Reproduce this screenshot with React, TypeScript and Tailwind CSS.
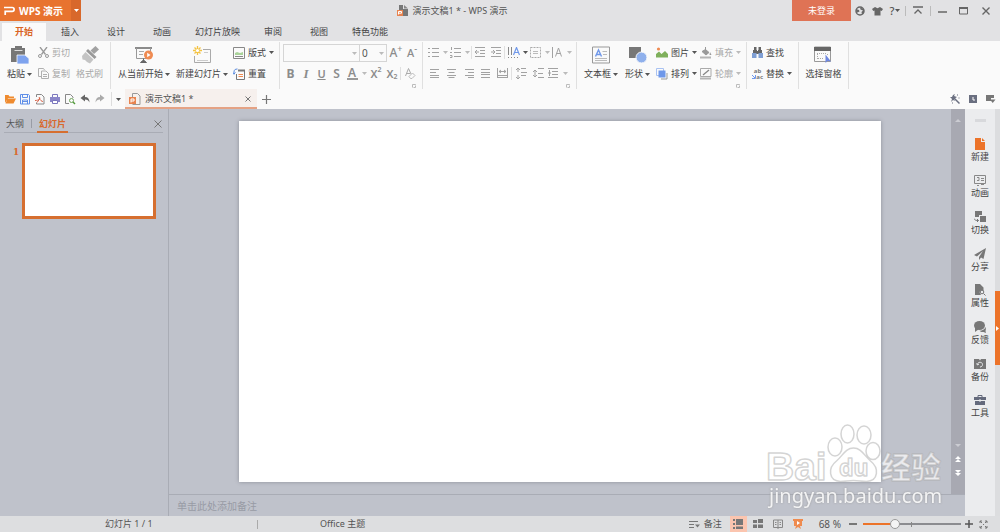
import type { ReactNode } from "react"

interface IconProps {
  w?: number
  h?: number
  className?: string
  children: ReactNode
}

function Icon({ w = 12, h = 12, className = "", children }: IconProps) {
  return (
    <svg
      width={w}
      height={h}
      viewBox={`0 0 ${w} ${h}`}
      fill="none"
      aria-hidden="true"
      className={`shrink-0 ${className}`}
    >
      {children}
    </svg>
  )
}

function Caret({ className = "text-[#555]" }: { className?: string }) {
  return (
    <Icon w={5} h={3} className={className}>
      <path d="M0 0h5L2.5 3z" fill="currentColor" />
    </Icon>
  )
}

function Launcher() {
  return (
    <button type="button" aria-label="更多设置" className="mr-[6px] flex h-[5px] w-1 self-end">
      <Icon w={4} h={4}>
        <path d="M.5 3.500V.5h3v1M1.500 3.500h2V2" stroke="#bbb" />
      </Icon>
    </button>
  )
}

/* ---------- title bar ---------- */

function TitleBar() {
  return (
    <header className="flex h-[21px] text-[#555]">
      <button type="button" className="flex w-[81px] items-stretch bg-[#e8732f] text-[10px] font-bold text-white">
        <span className="flex flex-1 items-center gap-1 pl-1">
          <Icon w={11} h={9}>
            <path d="M0 1.500h8.200a1.900 1.900 0 0 1 0 3.800H1.200V9" stroke="#fff" strokeWidth="1.700" />
          </Icon>
          <span className="whitespace-nowrap">WPS 演示</span>
        </span>
        <span className="flex w-[10px] items-center justify-center bg-[#d8682b]">
          <Caret className="text-white" />
        </span>
      </button>

      <h1 className="flex flex-1 items-center justify-center gap-1 pl-8 text-[9px] whitespace-nowrap">
        <Icon w={11} h={11}>
          <path d="M2 0h4v4h5v7H2z" fill="#777" />
          <path d="M7 0l4 3.500H7z" fill="#888" />
          <path d="M0 5h6v6H0z" fill="#e8834f" />
          <path d="M1.500 9.500V6.500h3v1.700h-3" stroke="#fff" />
        </Icon>
        <span>演示文稿1 * - WPS 演示</span>
      </h1>

      <div className="flex w-[208px] items-center">
        <button type="button" className="h-[21px] w-[59px] bg-[#df7355] text-[9px] text-white">
          未登录
        </button>
        <button type="button" aria-label="网络" className="flex w-[17px] justify-center">
          <Icon w={10} h={10}>
            <circle cx="5" cy="5" r="4" stroke="#666" strokeWidth="1.500" />
            <path d="M1 3l3 1 .5 1.500L1.500 7zM5 1.500L9 3v4L7 8.500 6.500 6 8 4.500 5.500 3.500z" fill="#666" />
          </Icon>
        </button>
        <button type="button" aria-label="皮肤" className="flex w-[18px] justify-center">
          <Icon w={11} h={10}>
            <path d="M3 1l2.500 1.300L8 1l3 2-1.300 2L8.500 4.500V9.500h-6V4.500L1.300 5 0 3z" fill="#666" />
          </Icon>
        </button>
        <button type="button" aria-label="帮助" className="flex w-[18px] items-center justify-center gap-px text-[11px] font-medium">
          ?
          <Caret />
        </button>
        <span className="ml-px h-[10px] w-px bg-[#bbb]" />
        <button type="button" aria-label="隐藏功能区" className="flex w-6 justify-center">
          <Icon w={10} h={9}>
            <path d="M0 1h10M1.500 7.500L5 4l3.500 3.500" stroke="#666" strokeWidth="1.300" />
          </Icon>
        </button>
        <span className="h-[10px] w-px bg-[#bbb]" />
        <button type="button" aria-label="最小化" className="flex w-[23px] justify-center">
          <Icon w={9} h={9}>
            <path d="M0 6h9" stroke="#666" strokeWidth="1.500" />
          </Icon>
        </button>
        <button type="button" aria-label="最大化" className="flex w-[18px] justify-center">
          <Icon w={9} h={8}>
            <path d="M.5 1h8v6h-8z" stroke="#666" />
            <path d="M0 1h9" stroke="#666" strokeWidth="2" />
          </Icon>
        </button>
        <button type="button" aria-label="关闭" className="flex flex-1 justify-center">
          <Icon w={8} h={8}>
            <path d="M.5.5l7 7M7.500.5l-7 7" stroke="#666" strokeWidth="1.400" />
          </Icon>
        </button>
      </div>
    </header>
  )
}

/* ---------- ribbon tabs ---------- */

const ribbonTabs = ["开始", "插入", "设计", "动画", "幻灯片放映", "审阅", "视图", "特色功能"]

function tabStyle(tab: string, active: boolean) {
  if (active) return "mr-px h-[18px] bg-[#fafafa] px-[13px] font-bold text-[#d96424]"
  return tab.length > 2 ? "h-[18px] px-[10px]" : "h-[18px] px-[14px]"
}

function RibbonTabs() {
  return (
    <nav className="flex h-5 items-end pl-[2px] text-[9px] text-[#444]">
      {ribbonTabs.map((tab, i) => (
        <button key={tab} type="button" className={tabStyle(tab, i === 0)}>
          {tab}
        </button>
      ))}
    </nav>
  )
}

/* ---------- ribbon ---------- */

function Group({ className = "", children }: { className?: string; children: ReactNode }) {
  return <div className={`flex h-[47px] shrink-0 border-r border-[#e0e0e0] ${className}`}>{children}</div>
}

interface BigButtonProps {
  label: string
  caret?: boolean
  disabled?: boolean
  children: ReactNode
}

function BigButton({ label, caret, disabled, children }: BigButtonProps) {
  return (
    <button
      type="button"
      disabled={disabled}
      className={`flex shrink-0 flex-col items-center ${disabled ? "text-[#a8a8a8]" : "text-[#444]"}`}
    >
      <span className="flex h-[22px] items-end">{children}</span>
      <span className="flex h-5 items-center gap-[2px] whitespace-nowrap">
        {label}
        {caret && <Caret />}
      </span>
    </button>
  )
}

function RowButton({ label, caret, disabled, children }: BigButtonProps) {
  return (
    <button
      type="button"
      disabled={disabled}
      className={`flex h-[21px] items-center gap-[3px] whitespace-nowrap ${disabled ? "text-[#a8a8a8]" : "text-[#444]"}`}
    >
      {children}
      {label}
      {caret && <Caret className={disabled ? "text-[#bbb]" : "text-[#555]"} />}
    </button>
  )
}

function Tool({ label, className = "w-[15px]", children }: { label: string; className?: string; children: ReactNode }) {
  return (
    <button
      type="button"
      aria-label={label}
      className={`flex h-[21px] shrink-0 items-center justify-center text-[#8c8c8c] ${className}`}
    >
      {children}
    </button>
  )
}

function Lines({ d }: { d: string }) {
  return (
    <Icon w={11} h={11}>
      <path d={d} stroke="#a2a2a2" />
    </Icon>
  )
}

const paleCaret = <Caret className="text-[#bbb]" />
const toolDivider = <span className="h-[13px] w-px shrink-0 self-center bg-[#e0e0e0]" />

function ClipboardGroup() {
  return (
    <Group className="w-[111px] gap-[6px] pl-[7px]">
      <BigButton label="粘贴" caret>
        <Icon w={18} h={18}>
          <path d="M0 2h4V0h7v2h3v14H0z" fill="#777" />
          <path d="M3.500 4.500h8" stroke="#ddd" />
          <path d="M6 9h8l4 3.500V18H6z" fill="#7ea3ee" stroke="#fafafa" strokeWidth=".8" />
        </Icon>
      </BigButton>
      <div className="flex flex-col">
        <RowButton label="剪切" disabled>
          <Icon w={11} h={11}>
            <path d="M2 0l5.500 7.500M9 0L3.500 7.500" stroke="#999" strokeWidth="1.300" />
            <circle cx="2" cy="9" r="1.500" stroke="#999" />
            <circle cx="9" cy="9" r="1.500" stroke="#999" />
          </Icon>
        </RowButton>
        <RowButton label="复制" disabled>
          <Icon w={11} h={11}>
            <path d="M3 8.500H.5v-8h5l1 1.500" stroke="#b0b0b0" />
            <path d="M3.500 3h4.500l2.500 2.500V10.500h-7zM5 6.500h4M5 8.500h4" stroke="#b0b0b0" />
          </Icon>
        </RowButton>
      </div>
      <BigButton label="格式刷" disabled>
        <Icon w={18} h={18}>
          <path d="M14.500 0L18 3.500 13 8 9.500 4.500z" fill="#a2a2a2" />
          <path d="M7 3l8.500 8-2 2L5 5z" fill="#999" />
          <path d="M4.500 6l8 7.500-3.500 4-3-1.500-2-2-2.500-.5L1 10z" fill="#c4c4c4" />
        </Icon>
      </BigButton>
    </Group>
  )
}

function SlidesGroup() {
  return (
    <Group className="w-[169px] gap-[6px] pl-[7px]">
      <BigButton label="从当前开始" caret>
        <Icon w={18} h={18}>
          <path d="M0 2h17" stroke="#666" strokeWidth="1.500" />
          <path d="M1.500 2v10.500h14V2" stroke="#999" />
          <path d="M4 5.500h5M4 8.500h4" stroke="#aaa" />
          <path d="M8.500 12.500V15M5.500 16.500l3-2.500 3 2.500z" stroke="#666" fill="#666" />
          <circle cx="13.500" cy="9" r="4.500" fill="#ef8b52" />
          <path d="M12.200 6.700v4.600l3.300-2.300z" fill="#fff" />
        </Icon>
      </BigButton>
      <BigButton label="新建幻灯片" caret>
        <Icon w={18} h={18}>
          <path d="M10 3.500h7.500v13h-16V10" stroke="#aaa" />
          <path d="M4 14.500h11M11 6.500h4" stroke="#ccc" />
          <path d="M4.500 0v9M0 4.500h9M1.500 1.500l6 6M7.500 1.500l-6 6" stroke="#f4c343" strokeWidth="1.300" />
          <circle cx="4.500" cy="4.500" r="1.600" fill="#fff" />
        </Icon>
      </BigButton>
      <div className="-ml-px flex flex-col items-start">
        <RowButton label="版式" caret>
          <Icon w={12} h={12}>
            <path d="M.5.5h11v11H.5z" stroke="#888" />
            <path d="M2 8V6l2-1 3 1 3-1v3z" fill="#a9d39a" />
            <path d="M2 9.500h8" stroke="#888" />
          </Icon>
        </RowButton>
        <RowButton label="重置">
          <Icon w={12} h={12}>
            <path d="M3.500 6v5.500h8V2" stroke="#777" />
            <path d="M5 2.500h7" stroke="#777" strokeWidth="2" />
            <path d="M5.500 6.500h4.500M5.500 8.500h4.500" stroke="#ef8b52" />
            <path d="M1 6.500V4C1 2 2 1 4.500 1M0 4.500l1 1.500 1.500-1.500" stroke="#5a8be0" />
          </Icon>
        </RowButton>
      </div>
    </Group>
  )
}

function FontGroup() {
  return (
    <Group className="w-[143px] flex-col pl-[3px]">
      <div className="flex h-[21px] items-center">
        <label className="relative block">
          <span className="sr-only">字体</span>
          <select className="block h-[18px] w-[77px] appearance-none border border-[#d5d5d5] bg-[#fafafa]"></select>
          <span className="pointer-events-none absolute top-[8px] right-[3px]">{paleCaret}</span>
        </label>
        <label className="relative block">
          <span className="sr-only">字号</span>
          <select className="block h-[18px] w-[27px] appearance-none border border-l-0 border-[#d5d5d5] bg-[#fafafa] pl-[2px] text-[10px] leading-4 text-[#555]">
            <option>0</option>
          </select>
          <span className="pointer-events-none absolute top-[8px] right-[3px]">{paleCaret}</span>
        </label>
        <Tool label="增大字号" className="w-[18px] text-[12px] font-medium">
          A<sup className="-top-1 text-[9px]">+</sup>
        </Tool>
        <Tool label="减小字号" className="w-[14px] text-[11px] font-medium">
          A<sup className="-top-1 text-[9px]">-</sup>
        </Tool>
      </div>
      <div className="flex h-[21px] items-center text-[11px]">
        <Tool label="加粗" className="w-[15px] text-[12px]">
          <b>B</b>
        </Tool>
        <Tool label="倾斜" className="w-4">
          <i className="font-['Liberation_Serif',serif] text-[13px] font-bold">I</i>
        </Tool>
        <Tool label="下划线">
          <u className="font-semibold">U</u>
        </Tool>
        <Tool label="阴影" className="w-[15px] text-[12px]">
          <span className="font-semibold">S</span>
        </Tool>
        <Tool label="字体颜色" className="w-4">
          <span className="h-3 w-[11px] border-b-2 border-[#999] text-[12px] leading-[10px] font-semibold">A</span>
        </Tool>
        <Tool label="选择字体颜色" className="w-2">
          {paleCaret}
        </Tool>
        <Tool label="上标" className="w-4 font-semibold">
          X<sup className="-top-1 text-[7px]">2</sup>
        </Tool>
        <Tool label="下标" className="w-4 font-semibold">
          X<sub className="-bottom-[3px] text-[7px]">2</sub>
        </Tool>
        {toolDivider}
        <Tool label="清除格式" className="w-[18px]">
          <Icon w={11} h={11}>
            <path d="M.5 8L3.500.5 6 6M1.500 5.500h3.500" stroke="#aaa" />
            <path d="M4 8.500L7.500 5 10 7.500 7 10.500H5.500z" stroke="#bbb" />
          </Icon>
        </Tool>
      </div>
      <Launcher />
    </Group>
  )
}

function ParagraphGroup() {
  return (
    <Group className="w-[154px] flex-col pl-1">
      <div className="flex h-[21px] items-center">
        <Tool label="项目符号" className="w-[22px] gap-1">
          <Lines d="M0 1.500h2M4 1.500h7M0 5.500h2M4 5.500h7M0 9.500h2M4 9.500h7" />
          {paleCaret}
        </Tool>
        <Tool label="编号" className="w-[22px] gap-1">
          <Lines d="M1.500 0v3M4 1.500h7M0 5.500h2M4 5.500h7M0 8.500h2v2H0M4 9.500h7" />
          {paleCaret}
        </Tool>
        {toolDivider}
        <Tool label="减少缩进" className="w-[17px]">
          <Lines d="M0 .5h10M5 3.500h5M5 6.500h5M0 9.500h10M0 5h4M2 3L0 5l2 2" />
        </Tool>
        <Tool label="增加缩进">
          <Lines d="M0 .5h10M5 3.500h5M5 6.500h5M0 9.500h10M0 5h4M2 3l2 2-2 2" />
        </Tool>
        {toolDivider}
        <Tool label="文字方向" className="ml-[2px] w-[21px] gap-[3px]">
          <Icon w={12} h={12}>
            <path d="M.5 0v8M3.500 0v8M.5 10v1M3.500 10v1M6.500 10v1M9.500 10v1" stroke="#888" />
            <path d="M5.500 8L8.500.5l3 7.500M6.500 5.500h4" stroke="#6f98ea" strokeWidth="1.200" />
          </Icon>
          <Caret />
        </Tool>
        <Tool label="对齐文本" className="w-[23px] gap-1">
          <Icon w={11} h={11}>
            <path d="M.5.5h10v10H.5z" stroke="#aaa" strokeDasharray="2 1" />
            <path d="M3 4.500h5M3 6.500h5" stroke="#bbb" />
          </Icon>
          {paleCaret}
        </Tool>
        <Tool label="文字排列" className="w-[22px] gap-1">
          <Lines d="M.5 0v11M3.500 9.500L6.500 1l3 8.500M4.500 6.500h4" />
          {paleCaret}
        </Tool>
      </div>
      <div className="flex h-[21px] items-center">
        <Tool label="左对齐">
          <Lines d="M1 1.500h9M1 4.500h6M1 7.500h9M1 9.500h9" />
        </Tool>
        <Tool label="居中" className="w-[18px]">
          <Lines d="M1 1.500h9M2.500 4.500h6M1 7.500h9M2.500 9.500h6" />
        </Tool>
        <Tool label="右对齐" className="w-[18px]">
          <Lines d="M1 1.500h9M4 4.500h6M1 7.500h9M4 9.500h6" />
        </Tool>
        <Tool label="两端对齐">
          <Lines d="M1 1.500h9M1 4.500h9M1 6.500h9M1 9.500h9" />
        </Tool>
        <Tool label="分散对齐" className="w-[18px]">
          <Lines d="M.5 0v10M10.500 0v10M2 3.500h7M4 2L2 3.500 4 5M7 2l2 1.500L7 5M1 7.500h9M1 9.500h9" />
        </Tool>
        {toolDivider}
        <Tool label="行距" className="w-[18px]">
          <Lines d="M2 0v4M2 7v4M0 2l2-2 2 2M0 9l2 2 2-2M5 .5h5M5 4.500h6M5 7.500h5" />
        </Tool>
        <Tool label="段落间距" className="w-[17px]">
          <Lines d="M2 2v7M0 4l2-2 2 2M0 7l2 2 2-2M5 .5h6M5 5.500h5M5 9.500h6" />
        </Tool>
        <Tool label="段落" className="w-[22px] gap-1">
          <Lines d="M0 .5h10M4 3.500h6M4 6.500h6M0 9.500h10M1.500 2v6M0 5h3" />
          {paleCaret}
        </Tool>
      </div>
      <Launcher />
    </Group>
  )
}

function DrawingGroup() {
  return (
    <Group className="w-[170px] flex-col pl-[7px]">
      <div className="flex gap-[7px]">
        <BigButton label="文本框" caret>
          <Icon w={18} h={18}>
            <path d="M.5 1h17v16H.5z" stroke="#999" />
            <path d="M3.500 10.500L6.500 4l3 6.500M4.500 8.500h4" stroke="#6f98ea" strokeWidth="1.400" />
            <path d="M10.500 5.500h4.500M11 8.500h4M3 12.500h12M3 14.500h12" stroke="#bbb" />
          </Icon>
        </BigButton>
        <BigButton label="形状" caret>
          <Icon w={18} h={18}>
            <path d="M0 1h12v11H0z" fill="#777" />
            <circle cx="12.500" cy="11.500" r="5.500" fill="#8fb0ec" stroke="#fafafa" />
          </Icon>
        </BigButton>
        <div className="-ml-px flex flex-col">
          <RowButton label="图片" caret>
            <Icon w={12} h={11}>
              <path d="M0 10.500V7l3-2.500L5.500 7 9 4l3 3v3.500z" fill="#7fb05c" />
              <circle cx="2.500" cy="2" r="1.600" fill="#ef8b52" />
            </Icon>
          </RowButton>
          <RowButton label="排列" caret>
            <Icon w={12} h={12}>
              <path d="M.5.5h7v7h-7z" stroke="#a9c2f2" />
              <path d="M2.500 2.500h7v7h-7z" fill="#6f98ea" />
              <path d="M11 5v6H5" stroke="#999" />
            </Icon>
          </RowButton>
        </div>
        <div className="-ml-1 flex flex-col">
          <RowButton label="填充" caret disabled>
            <Icon w={12} h={12}>
              <path d="M5.500 0v4M2 4.500L5.500 2.500 9 5.500 6 8z" stroke="#999" fill="#999" />
              <path d="M10 5l1.500 3h-2z" fill="#999" />
              <path d="M0 10.500h11" stroke="#b5b5b5" strokeWidth="2" />
            </Icon>
          </RowButton>
          <RowButton label="轮廓" caret disabled>
            <Icon w={12} h={12}>
              <path d="M11 .5H.5v8h10.500z" stroke="#aaa" />
              <path d="M3 7l6-5" stroke="#888" strokeWidth="1.300" />
              <path d="M0 10.500h11" stroke="#b5b5b5" strokeWidth="2" />
            </Icon>
          </RowButton>
        </div>
      </div>
      <Launcher />
    </Group>
  )
}

function EditingGroup() {
  return (
    <Group className="w-[52px] flex-col items-start pl-[5px]">
      <RowButton label="查找">
        <Icon w={11} h={12}>
          <path d="M2 0h2.500v3H2zM6.500 0H9v3H6.500zM1 3h4v3H1zM6 3h4v3H6zM4 4h3v3H4z" fill="#666" />
          <path d="M0 6h4.500v5H0zM6.500 6H11v5H6.500z" fill="#7f9fd4" />
        </Icon>
      </RowButton>
      <RowButton label="替换" caret>
        <span className="flex h-3 w-[11px] flex-col text-[6px] leading-[6px] font-bold text-[#777]">
          <span>ab</span>
          <span className="flex items-center justify-end">
            <Icon w={4} h={4}>
              <path d="M0 0l3 3M3.500 0v3.500H0" stroke="#6f98ea" />
            </Icon>
            ac
          </span>
        </span>
      </RowButton>
    </Group>
  )
}

function SelectionGroup() {
  return (
    <Group className="w-[50px] justify-center">
      <BigButton label="选择窗格">
        <Icon w={18} h={18}>
          <path d="M.5 1h16v14.500H.5z" stroke="#999" />
          <path d="M0 1h17v4H0z" fill="#666" />
          <path d="M3 7.500h10M3.500 8v5M4 12.500h6M13.500 8v2" stroke="#aaa" strokeDasharray="1 1" />
          <path d="M11.500 8.500v8.500l2-2 3.500.5z" fill="#6f88e0" />
        </Icon>
      </BigButton>
    </Group>
  )
}

/* ---------- quick access + document tabs ---------- */

const quickTools = [
  {
    label: "打开",
    icon: <path d="M1 10V2h3.500l1 1.500H10V5H4zM3.500 5.500H12L9.500 10.500H1.500z" fill="#ef8b2f" />,
  },
  {
    label: "保存",
    icon: (
      <>
        <path d="M1.500 1.500h8l1 1v8.500h-9z" stroke="#5f8fe8" />
        <path d="M3.500 1.500v3h5v-3M3.500 11V7h5v4M4 8.500h4" stroke="#5f8fe8" />
      </>
    ),
  },
  {
    label: "输出为PDF",
    icon: (
      <>
        <path d="M2.500 4V1.500h5L10 4v7H2.500V9.500" stroke="#888" />
        <path d="M1 7.500c4 0 5-2 4.500-3.500M5 4.500c1 3 3 4 4 4M3 9.500l3-4" stroke="#d9654a" />
      </>
    ),
  },
  {
    label: "打印",
    icon: (
      <>
        <path d="M3.500 4V1.500h5V4" stroke="#7a76bd" />
        <path d="M1 4h10v5H1z" fill="#8a86c9" />
        <path d="M3.500 7.500h5v3h-5z" fill="#fff" stroke="#7a76bd" />
      </>
    ),
  },
  {
    label: "打印预览",
    icon: (
      <>
        <path d="M5 10.500H1.500v-9h5L9 4v1" stroke="#888" />
        <circle cx="7.500" cy="7.500" r="2" stroke="#6fa55c" />
        <path d="M9 9l2 2" stroke="#4f9a3a" strokeWidth="1.500" />
      </>
    ),
  },
  {
    label: "撤消",
    icon: <path d="M1.500 5L6 1.500V4c3 0 4.500 2 4.500 5.500C9.500 7.500 8.500 6.500 6 6.500v2z" fill="#666" />,
  },
  {
    label: "恢复",
    icon: <path d="M10.500 5L6 1.500V4C3 4 1.500 6 1.500 9.500 2.500 7.500 3.500 6.500 6 6.500v2z" fill="#aaa" />,
  },
]

function DocumentBar() {
  return (
    <div className="flex h-5 items-stretch bg-[#fafafa] text-[#555]">
      <div className="flex items-center pl-[2px]">
        {quickTools.map((tool) => (
          <button key={tool.label} type="button" aria-label={tool.label} className="flex w-[15px] justify-center">
            <Icon>{tool.icon}</Icon>
          </button>
        ))}
        <span className="ml-1 h-[14px] w-px bg-[#ddd]" />
        <button type="button" aria-label="自定义快速访问工具栏" className="flex w-[13px] justify-center">
          <Caret />
        </button>
      </div>
      <div className="flex w-[132px] items-center border-b-2 border-[#e5a284] bg-[#f6f0ed] px-1 pt-[2px]">
        <Icon w={12} h={12}>
          <path d="M3.500 4V.5h5L11 3v8.500H3.500" stroke="#999" />
          <path d="M0 4h7v7H0z" fill="#e8834f" />
          <path d="M2 9.500V6h3v2H2" stroke="#fff" />
        </Icon>
        <span className="ml-1 flex-1 whitespace-nowrap">演示文稿1 *</span>
        <button type="button" aria-label="关闭文档" className="flex w-[10px] justify-center">
          <Icon w={6} h={6}>
            <path d="M.5.5l5 5M5.500.5l-5 5" stroke="#777" />
          </Icon>
        </button>
      </div>
      <button type="button" aria-label="新建文档" className="flex w-[18px] items-center justify-center">
        <Icon w={9} h={9}>
          <path d="M4.500 0v9M0 4.500h9" stroke="#777" strokeWidth="1.200" />
        </Icon>
      </button>
      <div className="ml-auto flex items-center gap-2 pr-1">
        <button type="button" aria-label="智能美化">
          <Icon w={10} h={10}>
            <path d="M4 4l5.500 5.500" stroke="#6a6f80" strokeWidth="1.500" />
            <path d="M5 0L4 2 7 3 4 5l1 2-2-1-2 2 1-3-2-2h2l1-2z" fill="#6a6f80" />
            <path d="M7 1h1M8.500 4h1M2 9h1" stroke="#6a6f80" />
          </Icon>
        </button>
        <button type="button" aria-label="历史版本">
          <Icon w={10} h={10}>
            <path d="M1 1h8v8H1z" fill="#6a6f80" />
            <path d="M5 3v3h2" stroke="#fff" />
          </Icon>
        </button>
        <button type="button" aria-label="窗口列表">
          <Icon w={10} h={10}>
            <path d="M0 1h8v3H5v3H0z" fill="#777" />
            <path d="M4 5.500h5.500L6.700 9z" fill="#777" />
          </Icon>
        </button>
      </div>
    </div>
  )
}

/* ---------- body ---------- */

function SlidePanel() {
  return (
    <aside className="w-[169px] shrink-0 border-r border-[#a9acb5]">
      <div className="mr-[5px] ml-1 flex h-6 items-stretch border-b border-[#a9acb5] pt-[6px]">
        <button type="button" className="h-[17px] px-[2px] text-[#555]">
          大纲
        </button>
        <span className="mx-[5px] mt-1 h-[9px] w-px bg-[#999ca5]" />
        <button type="button" className="h-[18px] border-b-2 border-[#d66f30] px-[2px] pt-[2px] font-bold text-[#d9682b]">
          幻灯片
        </button>
        <button type="button" aria-label="关闭窗格" className="ml-auto flex h-[17px] w-[9px] items-center">
          <Icon w={8} h={8}>
            <path d="M.5.5l7 7M7.500.5l-7 7" stroke="#777" />
          </Icon>
        </button>
      </div>
      <div className="flex gap-1 pt-[10px] pr-3 pl-[13px]">
        <span className="w-[5px] pt-[2px] font-['DejaVu_Serif',serif] text-[9px] font-bold text-[#d9682b]">1</span>
        <button
          type="button"
          aria-label="幻灯片 1"
          className="aspect-[135/77] flex-1 border-[3px] border-[#d66f30] bg-white"
        ></button>
      </div>
    </aside>
  )
}

function Watermark() {
  return (
    <div className="pointer-events-none absolute right-[18px] bottom-[6px]">
      <svg width="180" height="88" viewBox="0 0 180 88" aria-hidden="true">
        <g fill="#fff" fillOpacity=".7" stroke="#aaa" strokeOpacity=".5" strokeWidth="1.500" strokeLinejoin="round">
          <text x="-1" y="58" fontFamily="Liberation Sans, sans-serif" fontSize="39" fontWeight="700">
            Bai
          </text>
          <ellipse cx="68" cy="25" rx="7" ry="9" />
          <ellipse cx="80.500" cy="12" rx="6.500" ry="9" />
          <ellipse cx="97" cy="13" rx="7" ry="9" />
          <ellipse cx="106" cy="29" rx="7" ry="8.500" />
          <path d="M86.500 26c8 0 11 8 17 13 9 7 8 20-4 20.500-5 0-8-1-13-1s-8 1-13 1c-12-.5-13-13.500-4-20.500 6-5 9-13 17-13z" />
          <text x="72" y="54" fontFamily="Noto Sans, sans-serif" fontSize="23" fontWeight="700">
            du
          </text>
          <text x="114" y="56" fontFamily="Noto Sans CJK SC, sans-serif" fontSize="30" fontWeight="700">
            经验
          </text>
        </g>
        <text
          x="2"
          y="81"
          fontFamily="Noto Sans, sans-serif"
          fontSize="20"
          fill="#fff"
          fillOpacity=".85"
          className="drop-shadow-[0_0_1px_#999]"
        >
          jingyan.baidu.com
        </text>
      </svg>
    </div>
  )
}

function Workspace() {
  return (
    <main className="relative flex min-w-0 flex-1 flex-col">
      <div className="flex min-h-0 flex-1 border-b border-[#a9acb5]">
        <div className="flex flex-1 px-[70px] py-3">
          <section aria-label="幻灯片" className="flex-1 bg-white shadow-[0_0_4px_#8b8e98]"></section>
        </div>
        <div className="flex w-[14px] flex-col items-center bg-[#a8a9b2] py-2">
          <button type="button" aria-label="向上滚动">
            <Icon w={6} h={6}>
              <path d="M0 5h6L3 2z" fill="#cbccd2" />
            </Icon>
          </button>
          <button type="button" aria-label="向下滚动" className="mt-auto">
            <Icon w={6} h={4}>
              <path d="M0 0h6L3 3z" fill="#cbccd2" />
            </Icon>
          </button>
          <button type="button" aria-label="上一张幻灯片" className="mt-2">
            <Icon w={6} h={6}>
              <path d="M0 3h6L3 0zM0 6h6L3 3z" fill="#fff" />
            </Icon>
          </button>
          <button type="button" aria-label="下一张幻灯片" className="mt-2 mb-[10px]">
            <Icon w={6} h={6}>
              <path d="M0 0h6L3 3zM0 3h6L3 6z" fill="#fff" />
            </Icon>
          </button>
        </div>
      </div>
      <input
        type="text"
        aria-label="备注"
        placeholder="单击此处添加备注"
        className="h-[21px] shrink-0 bg-transparent px-2 text-[10px] placeholder:text-[#989ba5]"
      />
      <Watermark />
    </main>
  )
}

const sideTools = [
  { label: "新建", icon: <path d="M1 0h6v4h4v8H1zM8 0l3 3H8z" fill="#ec7329" /> },
  {
    label: "动画",
    icon: (
      <path d="M.5 1.500h11v8H.5zM3 3.500h2v3H3M7 4.500h3M7 6.500h3M3 11.500h2M7 10.500h3" stroke="#888" />
    ),
  },
  {
    label: "切换",
    icon: (
      <>
        <path d="M1 0h7v4H5v2H1zM6 5h6v6H6z" fill="#777" />
        <path d="M0 7.500c1 2 2 2 4.500 2M3 8l1.500 1.500L3 11" stroke="#777" />
      </>
    ),
  },
  { label: "分享", icon: <path d="M12 0L0 7l3 1.500L9 3 5 9v3l2-2.500L9.500 11z" fill="#777" /> },
  {
    label: "属性",
    icon: (
      <>
        <path d="M1 0h5l3.500 3.500V7l-2-1-2 2L7 11H1z" fill="#777" />
        <circle cx="8" cy="8" r="1.800" stroke="#777" />
        <path d="M9.500 9.500l2 2" stroke="#777" />
      </>
    ),
  },
  {
    label: "反馈",
    icon: (
      <>
        <ellipse cx="5.500" cy="4.500" rx="5.500" ry="4.500" fill="#777" />
        <path d="M1 6.500L1 11l4-3z" fill="#777" />
        <path d="M11.500 6c.7 2 .3 3 0 4l.5 2-2.500-1c-2 .3-3-.3-4-1.300 3 0 5-1.200 6-3.700z" fill="#777" />
      </>
    ),
  },
  {
    label: "备份",
    icon: (
      <>
        <path d="M0 1h5l1 1.500 1-1.500h5v10H0z" fill="#777" />
        <path d="M3.500 6.500c0-3 5-3 5 0 0 1.500-1 2.500-2.500 2.500M2.500 5.500l1 1.500 1.500-1" stroke="#e8eaec" />
      </>
    ),
  },
  {
    label: "工具",
    icon: (
      <>
        <path d="M4 3V1.500h4V3" stroke="#646a7c" />
        <path d="M0 3h12v3H0zM1 7h10v4H1z" fill="#646a7c" />
        <path d="M5 5.500h2v2H5z" fill="#e8eaec" />
      </>
    ),
  },
]

function SideBar() {
  return (
    <aside className="flex w-[35px] shrink-0 bg-[#ebecee]">
      <div className="flex flex-1 flex-col items-center pt-[10px]">
        <span className="h-[3px] w-[11px] bg-[#d8d9dc]" />
        <div className="mt-[10px] grid h-[293px] auto-rows-fr">
          {sideTools.map((tool) => (
            <button key={tool.label} type="button" className="flex flex-col items-center justify-center gap-[1px] text-[#444]">
              <Icon>{tool.icon}</Icon>
              <span className="leading-[12px]">{tool.label}</span>
            </button>
          ))}
        </div>
      </div>
      <div className="flex w-[5px] flex-col bg-[#dcdddf] pt-[182px]">
        <button type="button" aria-label="展开任务窗格" className="flex h-[74px] items-center bg-[#ec7329] pl-[1px]">
          <Icon w={3} h={5}>
            <path d="M0 0l3 2.500L0 5z" fill="#fff" />
          </Icon>
        </button>
      </div>
    </aside>
  )
}

/* ---------- status bar ---------- */

function StatusBar() {
  return (
    <footer className="flex h-4 shrink-0 items-center bg-[#dddee0] text-[#555]">
      <span className="w-[257px] pl-[105px] whitespace-nowrap">幻灯片 1 / 1</span>
      <span className="h-[9px] w-px bg-[#aaa]" />
      <span className="pl-[62px] whitespace-nowrap">Office 主题</span>
      <button type="button" className="ml-auto flex items-center gap-1">
        <Icon w={11} h={9}>
          <path d="M0 1.500h9M0 4.500h5M0 7.500h5" stroke="#777" />
          <path d="M6 4.500h5L8.500 7.500z" fill="#777" />
        </Icon>
        备注
      </button>
      <div className="ml-2 flex items-center gap-[3px]">
        <button type="button" aria-label="普通视图" className="flex h-4 w-[17px] items-center justify-center bg-[#fbc5af]">
          <Icon w={10} h={10}>
            <path d="M0 0h2v2H0zM0 4h2v2H0zM0 8h2v2H0zM3 0h7v6H3zM3 7.500h7V10H3z" fill="#777" />
          </Icon>
        </button>
        <button type="button" aria-label="幻灯片浏览" className="flex h-4 w-[17px] items-center justify-center">
          <Icon w={10} h={10}>
            <path d="M0 1h4v3H0zM5 0h5v4H5zM0 5.500h4V9H0zM5 5.500h5V9H5z" fill="#777" />
          </Icon>
        </button>
        <button type="button" aria-label="阅读视图" className="flex h-4 w-[17px] items-center justify-center">
          <Icon w={10} h={10}>
            <path d="M.5 1h9v7.500h-9zM5 1v9M2 3.500h1.500M2 5.500h1.500M6.500 3.500H8M6.500 5.500H8" stroke="#888" />
          </Icon>
        </button>
        <button type="button" aria-label="从当前幻灯片开始播放" className="flex h-4 w-[17px] items-center justify-center">
          <Icon w={10} h={10}>
            <path d="M0 0h10v2H9v5H7l1 3-3-2-3 2 1-3H1V2H0z" fill="#ef8b4f" />
            <path d="M4 2v4l3-2z" fill="#fff" />
          </Icon>
        </button>
      </div>
      <output htmlFor="zoom" className="ml-3 text-[10px] whitespace-nowrap">
        68 %
      </output>
      <button type="button" aria-label="缩小" className="ml-2">
        <Icon w={8} h={8}>
          <path d="M0 4h8" stroke="#555" strokeWidth="1.500" />
        </Icon>
      </button>
      <span className="relative ml-[6px] flex w-[98px] items-center">
        <span className="absolute left-[48px] h-[5px] w-px bg-[#888]" />
        <input
          id="zoom"
          type="range"
          aria-label="显示比例"
          min={0}
          max={100}
          defaultValue={31}
          className="h-[2px] w-full appearance-none bg-linear-to-r from-[#ec7329] from-32% to-[#8b8c90] to-32% [&::-webkit-slider-thumb]:h-[10px] [&::-webkit-slider-thumb]:w-[10px] [&::-webkit-slider-thumb]:appearance-none [&::-webkit-slider-thumb]:rounded-full [&::-webkit-slider-thumb]:border [&::-webkit-slider-thumb]:border-[#999] [&::-webkit-slider-thumb]:bg-[#f4f4f4]"
        />
      </span>
      <button type="button" aria-label="放大" className="ml-1">
        <Icon w={8} h={8}>
          <path d="M4 0v8M0 4h8" stroke="#555" strokeWidth="1.500" />
        </Icon>
      </button>
      <button type="button" aria-label="适应窗口" className="mr-3 ml-[6px]">
        <Icon w={9} h={9}>
          <path d="M1 3V1h2M6 1h2v2M8 6v2H6M3 8H1V6M1 1l2 2M8 1L6 3M8 8L6 6M1 8l2-2" stroke="#777" />
          <path d="M4 4h1v1H4z" fill="#777" />
        </Icon>
      </button>
    </footer>
  )
}

export default function App() {
  return (
    <div className="flex h-screen flex-col overflow-hidden bg-[#e2e2e4] font-['Noto_Sans','Noto_Sans_CJK_SC',sans-serif] text-[9px] leading-[14px]">
      <TitleBar />
      <RibbonTabs />
      <div className="flex h-12 shrink-0 bg-[#fafafa] pt-px">
        <ClipboardGroup />
        <SlidesGroup />
        <FontGroup />
        <ParagraphGroup />
        <DrawingGroup />
        <EditingGroup />
        <SelectionGroup />
      </div>
      <DocumentBar />
      <div className="flex min-h-0 flex-1 bg-[#bfc2cb]">
        <SlidePanel />
        <Workspace />
        <SideBar />
      </div>
      <StatusBar />
    </div>
  )
}
